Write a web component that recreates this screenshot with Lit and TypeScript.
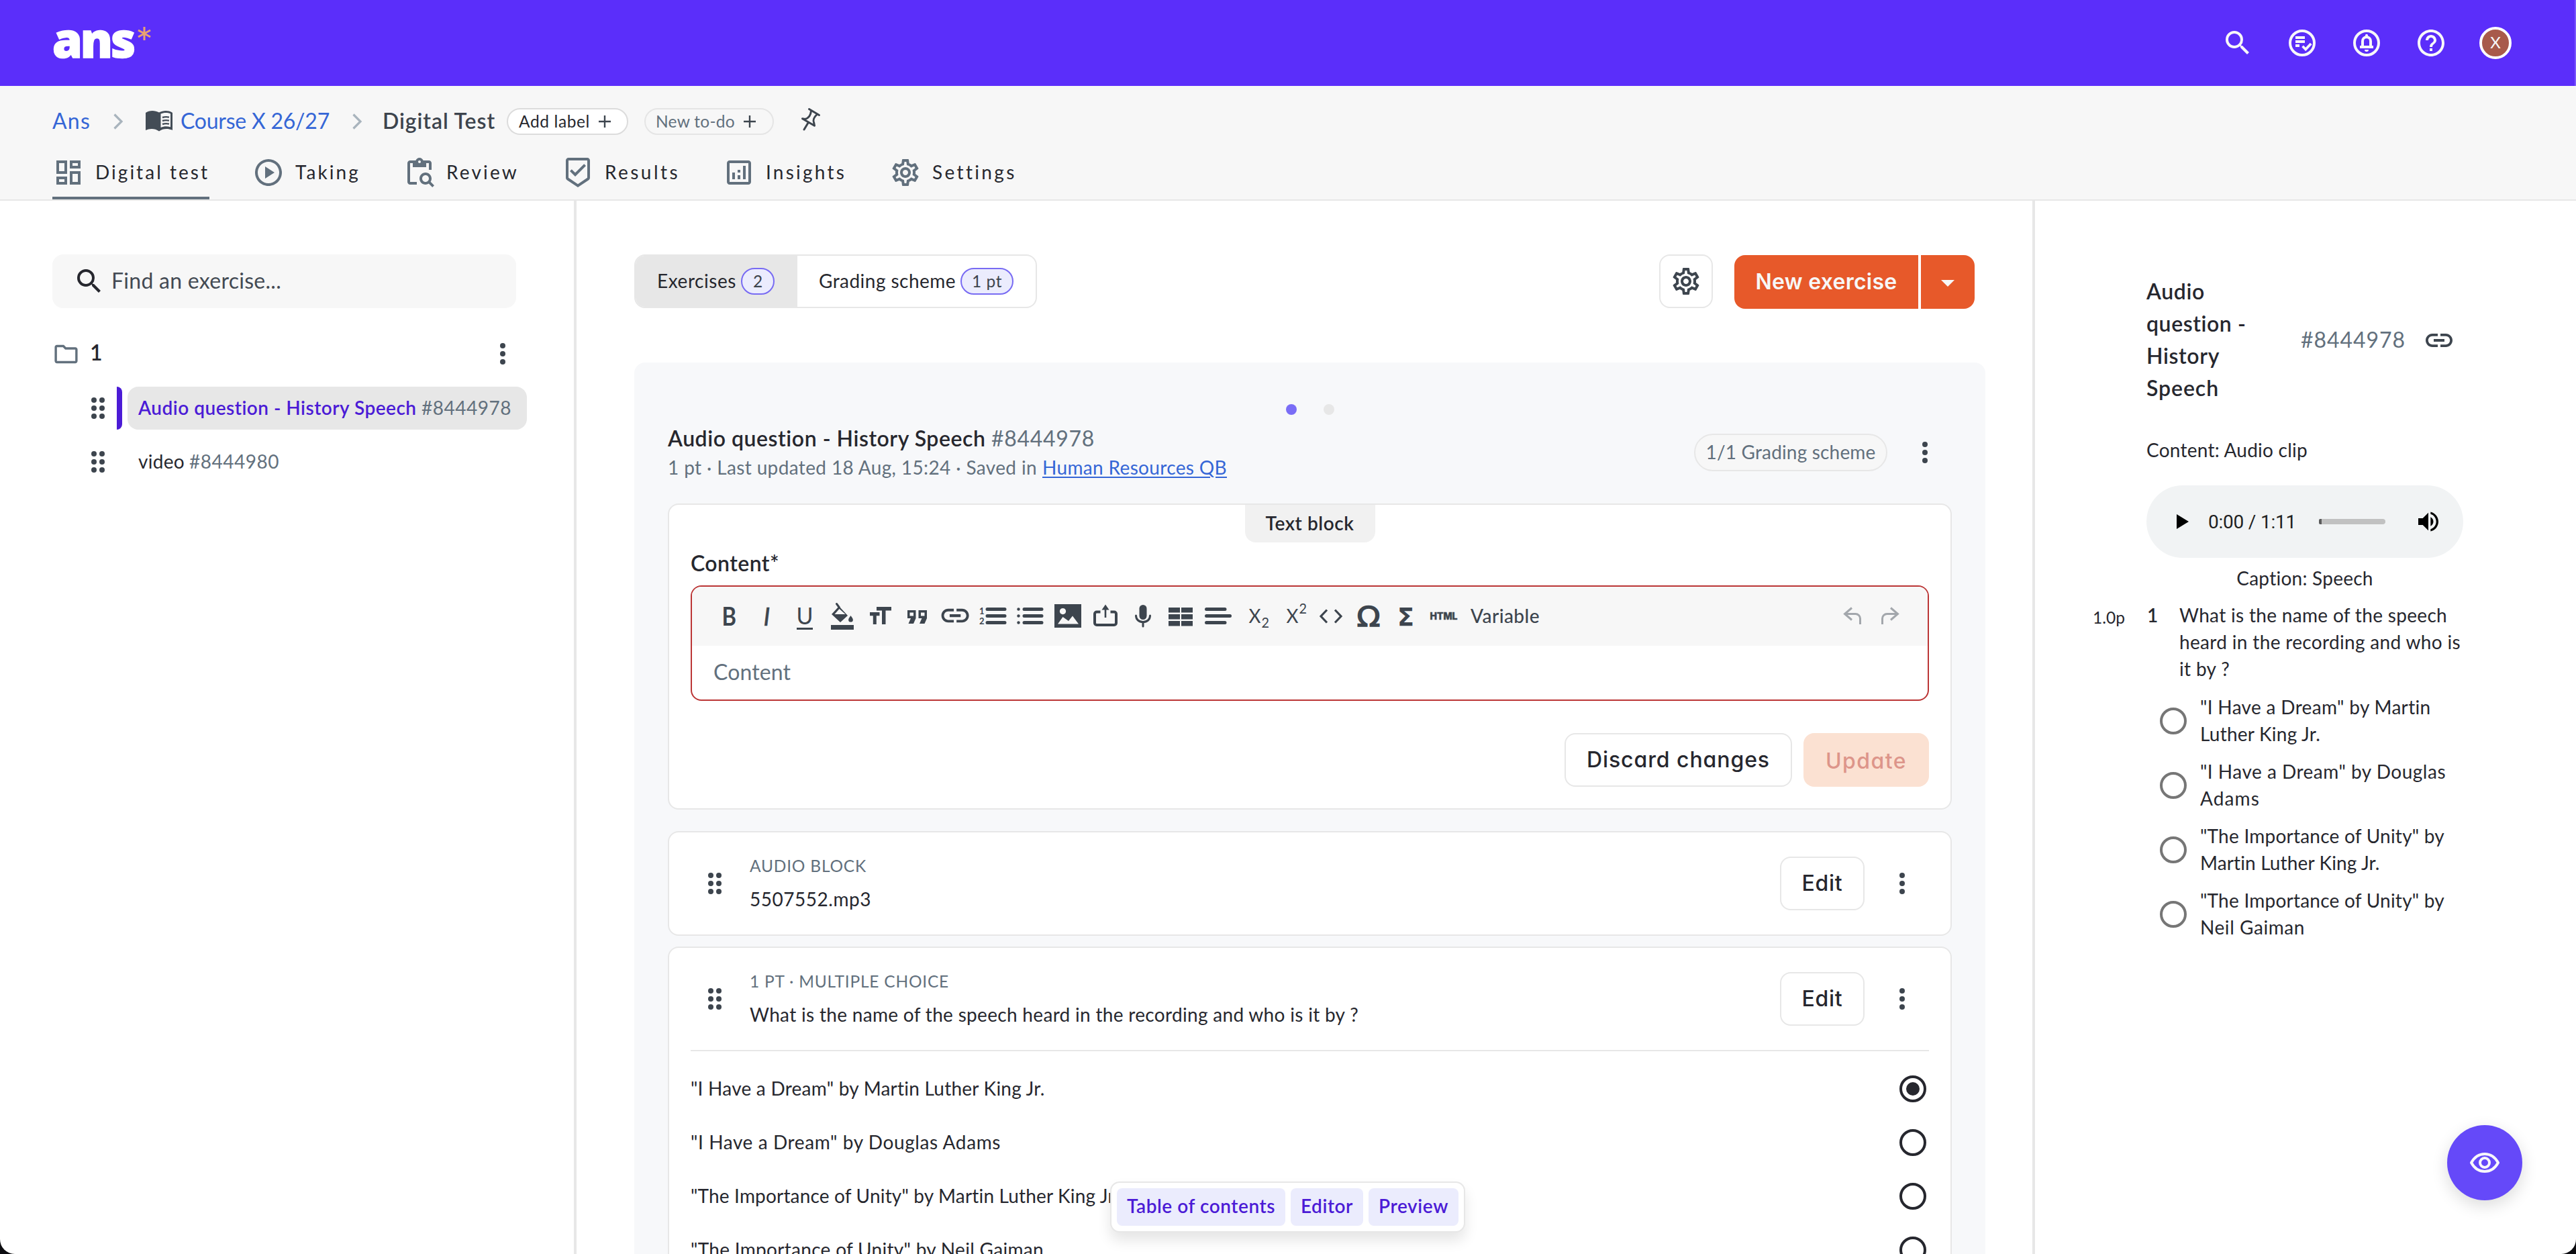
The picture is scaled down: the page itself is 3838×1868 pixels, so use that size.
import { LitElement, html, css, svg } from "lit";
import { customElement, property } from "lit/decorators.js";

/* A single line of text whose letters are spread to fill a given width. */
@customElement("fit-text")
class FitText extends LitElement {
  @property({ type: Number }) w = 0;
  static styles = css`
    :host {
      display: inline-block;
      white-space: nowrap;
      flex: none;
      width: max-content;
    }
  `;
  firstUpdated() {
    const count = (this.textContent || "").trim().length;
    const natural = this.getBoundingClientRect().width;
    if (!this.w || !count) return;
    this.style.letterSpacing = `${(this.w - natural) / count}px`;
    this.style.width = `${this.w}px`;
  }
  render() {
    return html`<slot></slot>`;
  }
}

const t = (w: number, text: string, cls = "") => html`<fit-text class=${cls} w=${w}>${text}</fit-text>`;

const icon = (body: unknown, size = 48, box = "0 0 24 24") =>
  html`<svg class="icon" width=${size} height=${size} viewBox=${box} fill="currentColor">${body}</svg>`;

const P = {
  search: svg`<path d="M15.5 14h-.79l-.28-.27A6.471 6.471 0 0 0 16 9.5 6.5 6.5 0 1 0 9.5 16c1.61 0 3.09-.59 4.23-1.57l.27.28v.79l5 4.99L20.49 19l-4.99-5zm-6 0C7.01 14 5 11.99 5 9.5S7.01 5 9.5 5 14 7.01 14 9.5 11.99 14 9.5 14z"/>`,
  help: svg`<path d="M11 18h2v-2h-2v2zm1-16C6.48 2 2 6.48 2 12s4.48 10 10 10 10-4.48 10-10S17.52 2 12 2zm0 18c-4.41 0-8-3.59-8-8s3.59-8 8-8 8 3.59 8 8-3.59 8-8 8zm0-14c-2.21 0-4 1.79-4 4h2c0-1.1.9-2 2-2s2 .9 2 2c0 2-3 1.75-3 5h2c0-2.25 3-2.5 3-5 0-2.21-1.79-4-4-4z"/>`,
  todo: svg`<circle cx="12" cy="12" r="9" fill="none" stroke="currentColor" stroke-width="2"/><path d="M7 7h7v2H7zM7 10h7v2H7zM7 13h3v2H7z"/><path d="M12.3 14.4l2.3 2.4 4-4.3" fill="none" stroke="currentColor" stroke-width="1.9"/>`,
  bell: svg`<circle cx="12" cy="12" r="9" fill="none" stroke="currentColor" stroke-width="2"/><path d="M7 14h10v2H7zM10.5 17h3a1.5 1.5 0 0 1-3 0z"/><path d="M9 15v-4.4a3 3 0 0 1 6 0V15" fill="none" stroke="currentColor" stroke-width="2"/><path d="M11 8V6.4a1 1 0 0 1 2 0V8z"/>`,
  dashboard: svg`<path d="M19 5v2h-4V5h4M9 5v6H5V5h4m10 8v6h-4v-6h4M9 17v2H5v-2h4M21 3h-8v6h8V3zM11 3H3v10h8V3zm10 8h-8v10h8V11zm-10 4H3v6h8v-6z"/>`,
  play: svg`<path d="M12 2C6.48 2 2 6.48 2 12s4.48 10 10 10 10-4.48 10-10S17.52 2 12 2zm0 18c-4.41 0-8-3.59-8-8s3.59-8 8-8 8 3.59 8 8-3.59 8-8 8zm-2.5-3.5 7-4.5-7-4.5v9z"/>`,
  review: svg`<path d="M5 5h2v3h10V5h2v5h2V5c0-1.1-.9-2-2-2h-4.18C14.4 1.84 13.3 1 12 1s-2.4.84-2.82 2H5c-1.1 0-2 .9-2 2v14c0 1.1.9 2 2 2h5v-2H5V5zm7-2c.55 0 1 .45 1 1s-.45 1-1 1-1-.45-1-1 .45-1 1-1z"/><path d="M20.3 18.9c.4-.7.7-1.5.7-2.4 0-2.5-2-4.5-4.5-4.5S12 14 12 16.5s2 4.5 4.5 4.5c.9 0 1.7-.3 2.4-.7l2.7 2.7 1.4-1.4-2.7-2.7zm-3.8.1c-1.4 0-2.5-1.1-2.5-2.5s1.1-2.5 2.5-2.5 2.5 1.1 2.5 2.5-1.1 2.5-2.5 2.5z"/>`,
  results: svg`<path d="M19 1H5c-1.1 0-1.99.9-1.99 2L3 15.93c0 .69.35 1.3.88 1.66L12 23l8.11-5.41c.53-.36.88-.97.88-1.66L21 3c0-1.1-.9-2-2-2zm0 14.93l-7 4.66-7-4.67V3h14v12.93zm-9-.93l8-8-1.41-1.42L10 12.17 7.41 9.59 6 11z"/>`,
  insights: svg`<path d="M19 3H5c-1.1 0-2 .9-2 2v14c0 1.1.9 2 2 2h14c1.1 0 2-.9 2-2V5c0-1.1-.9-2-2-2zm0 16H5V5h14v14z"/><path d="M7 12h2v5H7zM15 7h2v10h-2zM11 14h2v3h-2zM11 10h2v2h-2z"/>`,
  gear: svg`<path d="M19.43 12.98c.04-.32.07-.64.07-.98s-.03-.66-.07-.98l2.11-1.65c.19-.15.24-.42.12-.64l-2-3.46c-.09-.16-.26-.25-.44-.25-.06 0-.12.01-.17.03l-2.49 1c-.52-.4-1.08-.73-1.69-.98l-.38-2.65C14.46 2.18 14.25 2 14 2h-4c-.25 0-.46.18-.49.42l-.38 2.65c-.61.25-1.17.59-1.69.98l-2.49-1c-.06-.02-.12-.03-.18-.03-.17 0-.34.09-.43.25l-2 3.46c-.13.22-.07.49.12.64l2.11 1.65c-.04.32-.07.65-.07.98s.03.66.07.98l-2.11 1.65c-.19.15-.24.42-.12.64l2 3.46c.09.16.26.25.44.25.06 0 .12-.01.17-.03l2.49-1c.52.4 1.08.73 1.69.98l.38 2.65c.03.24.24.42.49.42h4c.25 0 .46-.18.49-.42l.38-2.65c.61-.25 1.17-.59 1.69-.98l2.49 1c.06.02.12.03.18.03.17 0 .34-.09.43-.25l2-3.46c.12-.22.07-.49-.12-.64l-2.11-1.65zm-1.98-1.71c.04.31.05.52.05.73 0 .21-.02.43-.05.73l-.14 1.13.89.7 1.08.84-.7 1.21-1.27-.51-1.04-.42-.9.68c-.43.32-.84.56-1.25.73l-1.06.43-.16 1.13-.2 1.35h-1.4l-.19-1.35-.16-1.13-1.06-.43c-.43-.18-.83-.41-1.23-.71l-.91-.7-1.06.43-1.27.51-.7-1.21 1.08-.84.89-.7-.14-1.13c-.03-.31-.05-.54-.05-.74s.02-.43.05-.73l.14-1.13-.89-.7-1.08-.84.7-1.21 1.27.51 1.04.42.9-.68c.43-.32.84-.56 1.25-.73l1.06-.43.16-1.13.2-1.35h1.39l.19 1.35.16 1.13 1.06.43c.43.18.83.41 1.23.71l.91.7 1.06-.43 1.27-.51.7 1.21-1.07.85-.89.7.14 1.13zM12 8c-2.21 0-4 1.79-4 4s1.79 4 4 4 4-1.79 4-4-1.79-4-4-4zm0 6c-1.1 0-2-.9-2-2s.9-2 2-2 2 .9 2 2-.9 2-2 2z"/>`,
  folder: svg`<path d="M9.17 6l2 2H20v10H4V6h5.17M10 4H4c-1.1 0-1.99.9-1.99 2L2 18c0 1.1.9 2 2 2h16c1.1 0 2-.9 2-2V8c0-1.1-.9-2-2-2h-8l-2-2z"/>`,
  link: svg`<path d="M3.9 12c0-1.71 1.39-3.1 3.1-3.1h4V7H7c-2.76 0-5 2.24-5 5s2.24 5 5 5h4v-1.9H7c-1.71 0-3.1-1.39-3.1-3.1zM8 13h8v-2H8v2zm9-6h-4v1.9h4c1.71 0 3.1 1.39 3.1 3.1s-1.39 3.1-3.1 3.1h-4V17h4c2.76 0 5-2.24 5-5s-2.24-5-5-5z"/>`,
  volume: svg`<path d="M3 9v6h4l5 5V4L7 9H3zm13.5 3c0-1.77-1.02-3.29-2.5-4.03v8.05c1.48-.73 2.5-2.25 2.5-4.02zM14 3.23v2.06c2.89.86 5 3.54 5 6.71s-2.11 5.85-5 6.71v2.06c4.01-.91 7-4.49 7-8.77s-2.99-7.86-7-8.77z"/>`,
  kebab: svg`<circle cx="12" cy="6" r="2"/><circle cx="12" cy="12" r="2"/><circle cx="12" cy="18" r="2"/>`,
  drag: svg`<circle cx="9" cy="6" r="2"/><circle cx="9" cy="12" r="2"/><circle cx="9" cy="18" r="2"/><circle cx="15" cy="6" r="2"/><circle cx="15" cy="12" r="2"/><circle cx="15" cy="18" r="2"/>`,
};

const plus = html`<svg width="20" height="20" viewBox="0 0 20 20"><path d="M1 10h18M10 1v18" stroke="#3d454e" stroke-width="2.4"/></svg>`;
const chevron = html`<svg class="chev" width="16" height="24" viewBox="0 0 16 24"><path d="M2.5 1.5L13 12 2.5 22.5" fill="none" stroke="#a9b4bd" stroke-width="3.2"/></svg>`;

/* Editor toolbar glyphs, each in a 56x56 cell. */
const line = (d: string, w: number, cap = "round") =>
  svg`<path d=${d} fill="none" stroke="currentColor" stroke-width=${w} stroke-linecap=${cap}/>`;
const tools = [
  svg`<text x="16.500" y="42" font-size="38" font-weight="700" textLength="21.500" lengthAdjust="spacingAndGlyphs">B</text>`,
  svg`<text x="22.500" y="42" font-size="37" font-style="italic" stroke="currentColor" stroke-width=".6">I</text>`,
  svg`<text x="15.5" y="39.5" font-size="35" textLength="25" lengthAdjust="spacingAndGlyphs">U</text><path d="M16 45h24v3H16z"/>`,
  svg`<path d="M11 41h34v7H11z"/>${line("M19.5 9.5l4 5.5", 3)}<path d="M23 13l13 14-11 10-13-12zM16.500 25h16L23.500 17z" fill-rule="evenodd"/><path d="M40.500 27c2 3 3.400 4.500 3.400 6.200a3.400 3.400 0 0 1-6.800 0c0-1.700 1.400-3.200 3.400-6.200z"/>`,
  svg`<path d="M23 14h22v5.500h-8.500V40h-5.500V19.500h-8zM13 22h14.500v5.200h-4.700V40h-5V27.200H13z"/>`,
  svg`<path d="M13 19h12.500v12l-3.500 8h-7.500l3.500-8h-5zM16.500 22.500v5h5.500v-5zM29.500 19H42v12l-3.500 8H31l3.500-8h-5zM33 22.500v5h5.500v-5z" fill-rule="evenodd"/>`,
  svg`<g transform="translate(3.500 2.500) scale(2.050)">${P.link}</g>`,
  svg`${line("M20 17.500h26M20 27.500h26M20 37.500h26", 5)}<text x="8" y="25" font-size="13" font-weight="700">1</text><text x="8" y="40" font-size="13" font-weight="700">2</text>`,
  svg`${line("M19 17.500h26M19 27.500h26M19 37.500h26", 5)}<circle cx="10.500" cy="17.500" r="2.200"/><circle cx="10.500" cy="27.500" r="2.200"/><circle cx="10.500" cy="37.500" r="2.200"/>`,
  svg`<path d="M8 10h40v35H8zM20.500 16a4.600 4.600 0 1 0 .01 0zM13 39.500h31L35 27.500l-6 7.500-8.500-6z" fill-rule="evenodd"/>`,
  svg`${line("M20.500 21.500H15a3 3 0 0 0-3 3V38a3 3 0 0 0 3 3h26a3 3 0 0 0 3-3V24.500a3 3 0 0 0-3-3h-5.500", 4, "butt")}${line("M28 30V15", 2.6, "butt")}<path d="M28 10.500l5.500 8h-11z"/>`,
  svg`<rect x="22.500" y="11" width="11" height="22" rx="5.500"/>${line("M17.500 27c0 6 4.500 9.500 10.500 9.500S38.500 33 38.500 27M28 37v6", 3)}`,
  svg`<path d="M10 15h17v7.500H10zM29 15h17v7.500H29zM10 25h17v7.500H10zM29 25h17v7.500H29zM10 35h17v7.500H10zM29 35h17v7.500H29z"/>`,
  svg`${line("M10.500 17.500h27.500M10.500 27.500h35M10.500 37.500h27.500", 5)}`,
  svg`<text x="17.500" y="38" font-size="28" textLength="18" lengthAdjust="spacingAndGlyphs">X</text><text x="36.500" y="44.500" font-size="21" textLength="11.500" lengthAdjust="spacingAndGlyphs">2</text>`,
  svg`<text x="17.500" y="37.500" font-size="28" textLength="18" lengthAdjust="spacingAndGlyphs">X</text><text x="36.500" y="24" font-size="21" textLength="11.500" lengthAdjust="spacingAndGlyphs">2</text>`,
  svg`<path d="M22 18.500l-9 9.500 9 9.500M34 18.500l9 9.500-9 9.500" fill="none" stroke="currentColor" stroke-width="3.200"/>`,
  svg`<text x="10.500" y="42.500" font-size="40" class="sym thin" textLength="35" lengthAdjust="spacingAndGlyphs">Ω</text>`,
  svg`<text x="15" y="42" font-size="38" class="sym" textLength="25" lengthAdjust="spacingAndGlyphs">Σ</text>`,
  svg`<text x="7.500" y="33" font-size="14.500" class="mark" textLength="41" lengthAdjust="spacingAndGlyphs">HTML</text>`,
];
const undo = svg`<path d="M27 15.500L16.500 24.500 27 33.500M17 24.500h15.500a7 7 0 0 1 7 7v8.500" fill="none" stroke="currentColor" stroke-width="3"/>`;

const tabs: [unknown, string, number][] = [
  [P.dashboard, "Digital test", 170],
  [P.play, "Taking", 97],
  [P.review, "Review", 108],
  [P.results, "Results", 112],
  [P.insights, "Insights", 120],
  [P.gear, "Settings", 125],
];

const answers: [string, number][] = [
  ['"I Have a Dream" by Martin Luther King Jr.', 528],
  ['"I Have a Dream" by Douglas Adams', 462],
  ['"The Importance of Unity" by Martin Luther King Jr.', 638],
  ['"The Importance of Unity" by Neil Gaiman', 526],
];

const options: [string, number][][] = [
  [['"I Have a Dream" by Martin', 344], ["Luther King Jr.", 179]],
  [['"I Have a Dream" by Douglas', 366], ["Adams", 89]],
  [['"The Importance of Unity" by', 364], ["Martin Luther King Jr.", 268]],
  [['"The Importance of Unity" by', 364], ["Neil Gaiman", 156]],
];

@customElement("app-root")
class AppRoot extends LitElement {
  static styles = css`
    :host {
      display: block;
      background: #0c0c10;
      font-family: Lato, "Noto Sans", "Open Sans", sans-serif;
      font-size: 28px;
      line-height: 40px;
      color: #26272e;
    }
    * { box-sizing: border-box; }
    svg { display: block; flex: none; }
    .app {
      position: relative;
      width: 3838px;
      height: 1868px;
      overflow: hidden;
      background: #fff;
      border-radius: 0 0 22px 22px;
      display: flex;
      flex-direction: column;
    }
    .semi { font-weight: 600; }
    .big { font-size: 32px; }
    .mute { color: #62707d; }

    .top {
      height: 128px;
      flex: none;
      background: #5b2efa;
      border-right: 2px solid #7a57fb;
      display: flex;
      align-items: center;
      justify-content: space-between;
      padding: 0 94px 0 78px;
      color: #f7f7f9;
    }
    .brand { display: flex; align-items: flex-start; }
    .logo {
      font-family: "Open Sans", "Noto Sans", sans-serif;
      font-weight: 800;
      font-size: 72px;
      line-height: 116px;
      height: 128px;
      color: #fff;
      -webkit-text-stroke: 1.6px #fff;
    }
    .star { margin: 38px 0 0 4px; }
    .actions { display: flex; gap: 48px; }
    .avatar {
      width: 48px;
      height: 48px;
      border: 4px solid #fff;
      border-radius: 50%;
      background: #a85a4b;
      font-size: 24px;
      line-height: 38px;
      text-align: center;
    }

    .sub {
      flex: none;
      height: 171px;
      background: #f7f7f7;
      border-bottom: 2px solid #e7e7e7;
      padding: 33px 0 0 78px;
    }
    .crumbs { display: flex; align-items: center; height: 40px; }
    .crumbs .big { padding-bottom: 3px; }
    .link { color: #3566d6; }
    .chev { margin-top: -1px; }
    .g1 { margin-left: 33px; }
    .g2 { margin: -2px 0 0 33px; }
    .g3 { margin-left: 12px; }
    .g4 { margin-left: 33px; }
    .g5 { margin-left: 30px; }
    .title { color: #3d444d; }
    .pill {
      height: 40px;
      border: 2px solid #dcdcdc;
      border-radius: 20px;
      background: #fff;
      display: flex;
      align-items: center;
      font-size: 24.5px;
      padding: 0 22px 1px 16px;
      gap: 12px;
      width: 181px;
      margin-left: 17px;
    }
    .pill.dim {
      background: #f7f7f7;
      border-color: #e5e5e5;
      width: 193px;
      margin-left: 24px;
      padding-left: 15px;
    }
    .pin { margin: -6px 0 0 38px; }
    .tabs { display: flex; gap: 64px; margin-top: 32px; }
    .tab {
      display: flex;
      gap: 16px;
      height: 64px;
      border-bottom: 4px solid transparent;
      color: #62707d;
    }
    .tab fit-text { line-height: 46px; color: #26272e; }
    .tab.on { border-color: #62707d; }

    .body { flex: 1; display: grid; grid-template-columns: 859px 2173px 1fr; min-height: 0; }
    .side { border-right: 4px solid #e7e7e7; padding: 80px 0 0 78px; }
    .find {
      width: 691px;
      height: 80px;
      border-radius: 16px;
      background: #f7f7f7;
      display: flex;
      align-items: center;
      gap: 9px;
      padding-left: 31px;
    }
    .find fit-text { color: #434a53; padding-bottom: 3px; }
    .folder { display: flex; align-items: center; width: 695px; height: 48px; margin-top: 44px; gap: 15px; }
    .folder fit-text { padding-bottom: 4px; }
    .folder .icon:first-child { color: #62707d; }
    .folder .icon:last-child { margin-left: auto; color: #3d454e; }
    .row { display: flex; height: 64px; padding-left: 44px; align-items: center; margin-top: 16px; color: #3d454e; }
    .row.first { margin-top: 25px; }
    .bar { width: 8px; height: 64px; margin: 0 8px 0 4px; border-radius: 0 8px 8px 0; }
    .item {
      width: 595px;
      height: 64px;
      border-radius: 16px;
      display: flex;
      align-items: center;
      gap: 7px;
      padding: 0 0 2px 16px;
      color: #26272e;
    }
    .on .bar { background: #4b1bd6; }
    .on .item { background: #e7e7e7; color: #4b1bd6; }

    .main {
      border-right: 4px solid #e7e7e7;
      padding: 80px 0 0 86px;
      display: flex;
      flex-direction: column;
      min-height: 0;
    }
    .bar2 { display: flex; width: 1997px; height: 81px; align-items: flex-start; flex: none; }
    .seg { display: flex; height: 80px; width: 600px; border: 2px solid #e7e7e7; border-radius: 16px; overflow: hidden; }
    .seg > div { display: flex; align-items: center; padding-left: 32px; gap: 7px; flex: 1; }
    .seg > .cur { background: #e7e7e7; flex: none; width: 241px; }
    .seg > div > fit-text { padding-bottom: 2px; }
    .badge {
      height: 40px;
      width: 50px;
      border: 2px solid #786bf3;
      border-radius: 20px;
      background: #ebecfd;
      font-size: 24.5px;
      line-height: 35px;
      text-align: center;
      color: #3d444d;
    }
    .badge.wide { width: 79px; }
    .btn {
      height: 80px;
      border: 2px solid #e7e7e7;
      border-radius: 16px;
      background: #fff;
      display: flex;
      align-items: center;
      justify-content: center;
      font-family: Inter, Roboto, sans-serif;
      font-feature-settings: "cv11";
      font-weight: 500;
      font-size: 32px;
      flex: none;
    }
    .cog { width: 80px; margin-left: auto; color: #3d454e; }
    .new { width: 274px; border: 0; border-radius: 16px 0 0 16px; background: #e7592a; color: #f7f7f7; margin: 1px 4px 0 32px; font-weight: 600; }
    .caret { width: 80px; border: 0; border-radius: 0 16px 16px 0; background: #e7592a; margin-top: 1px; }

    .panel {
      width: 2013px;
      margin-top: 80px;
      flex: 1;
      min-height: 0;
      background: #f7f8fa;
      border-radius: 16px 16px 0 0;
      padding: 62px 50px 0;
      overflow: hidden;
    }
    .dots { display: flex; justify-content: center; gap: 40px; }
    .dot { width: 16px; height: 16px; border-radius: 50%; background: #e7e7e7; }
    .dot.cur { background: #7a6df6; }
    .head { display: flex; align-items: center; height: 88px; margin-top: 12px; padding-right: 16px; }
    .head .lines { flex: 1; line-height: 45px; }
    .lines > div { display: flex; gap: 8px; height: 44px; }
    .lines .link { text-decoration: underline; text-decoration-thickness: 2px; text-underline-offset: 3px; }
    .scheme {
      width: 288px;
      height: 56px;
      border: 2px solid #e7e7e7;
      border-radius: 28px;
      background: #f7f7f7;
      line-height: 51px;
      text-align: center;
      margin-right: 32px;
    }
    .dark { color: #3d454e; }
    .card { background: #fff; border: 2px solid #e7e7e7; border-radius: 16px; padding: 0 32px; }
    .c1 { height: 456px; margin-top: 32px; display: flex; flex-direction: column; }
    .tag {
      width: 194px;
      height: 56px;
      align-self: center;
      background: #f1f1f1;
      border-radius: 0 0 16px 16px;
      line-height: 54px;
      text-align: center;
      flex: none;
    }
    .label { margin: 11px 0 13px 0; height: 40px; }
    .editor { height: 172px; border: 2px solid #bb3535; border-radius: 16px; overflow: hidden; flex: none; }
    .tools { display: flex; align-items: center; height: 88px; background: #f7f7f7; padding: 0 28px; color: #3d454e; }
    .tools svg { font-family: Lato, "Noto Sans", sans-serif; }
    .sym { font-family: "DejaVu Sans", sans-serif; font-weight: 700; }
    .thin { font-weight: 400; stroke: currentColor; stroke-width: 1.4px; }
    .mark { font-family: Inter, sans-serif; font-weight: 800; stroke: currentColor; stroke-width: 0.5px; }
    .tools fit-text { margin: 0 auto 2px 12px; font-weight: 500; }
    .off { color: #a3a7ac; }
    .flip { transform: scaleX(-1); }
    .ph { padding-left: 32px; line-height: 78px; }
    .foot { display: flex; justify-content: flex-end; gap: 17px; margin-top: 48px; }
    .discard { width: 339px; }
    .update { width: 187px; border: 0; background: #fbe1d2; color: #dd958a; padding-top: 4px; }
    .block { display: flex; align-items: center; height: 152px; padding: 0 16px 0 12px; color: #3d454e; }
    .block .txt { flex: 1; margin-left: 28px; padding-bottom: 4px; color: #26272e; }
    .kind { font-size: 24.5px; height: 49px; line-height: 40px; }
    .edit { width: 126px; margin-right: 32px; color: #26272e; }
    .c2 { height: 156px; margin-top: 32px; }
    .c3 { height: 700px; margin-top: 16px; }
    .c3 .block { border-bottom: 2px solid #e7e7e7; height: 154px; }
    .ans { display: flex; align-items: center; justify-content: space-between; height: 80px; padding-right: 4px; }
    .ans:nth-child(2) { margin-top: 16px; }
    .ans fit-text { padding-bottom: 2px; }
    .radio { width: 40px; height: 40px; border: 4px solid #26272e; border-radius: 50%; padding: 6px; flex: none; }
    .radio.sel::after { content: ""; display: block; width: 20px; height: 20px; border-radius: 50%; background: #26272e; }

    .prev { padding: 111px 0 0 86px; }
    .ptitle { display: flex; align-items: center; padding-left: 80px; height: 192px; }
    .ptitle .name { width: 230px; line-height: 48px; }
    .name fit-text { display: block; }
    .ptitle .icon { margin: 1px 0 0 26px; color: #3d454e; }
    .kindline { margin: 48px 0 33px 80px; }
    .player {
      width: 472px;
      height: 108px;
      margin-left: 80px;
      border-radius: 54px;
      background: #f1f3f4;
      display: flex;
      align-items: center;
      padding-left: 45px;
      font-family: Roboto, "Liberation Sans", sans-serif;
      color: #1f1f1f;
    }
    .player .time { margin-left: 29px; padding-top: 1px; }
    .track { width: 99px; height: 8px; margin-left: 34px; border-radius: 2px 4px 4px 2px; background: #c1c1c1; border-left: 4px solid #5a5a5a; }
    .player .icon { margin-left: 44px; color: #000; }
    .cap { width: 472px; margin: 10px 0 15px 80px; text-align: center; }
    .q { display: grid; grid-template-columns: 81px 48px 1fr; }
    .q .pts { font-size: 24.5px; padding-top: 4px; }
    .stack > fit-text { display: block; }
    .opts { display: flex; flex-direction: column; gap: 16px; margin: 17px 0 0 100px; }
    .opt { display: flex; align-items: center; gap: 20px; height: 80px; }
    .opt .radio { border-color: #767676; margin-top: 2px; }

    .jump {
      position: absolute;
      left: 1654px;
      top: 1760px;
      width: 529px;
      height: 76px;
      background: #fff;
      border: 2px solid #e7e7e7;
      border-radius: 14px;
      box-shadow: 0 12px 20px rgba(0, 0, 0, 0.1);
      display: flex;
      align-items: center;
      justify-content: center;
      gap: 8px;
      color: #4b1bd6;
    }
    .jump > div { background: #ebecfd; border-radius: 8px; height: 56px; line-height: 53px; padding: 0 15px; }
    .fab {
      position: absolute;
      left: 3646px;
      top: 1676px;
      width: 112px;
      height: 112px;
      border-radius: 50%;
      background: #6549f9;
      box-shadow: 0 8px 24px rgba(0, 0, 0, 0.14);
      display: flex;
      align-items: center;
      justify-content: center;
    }
  `;

  private block(kind: string, kw: number, text: string, tw: number) {
    return html`<div class="block">
      ${icon(P.drag)}
      <div class="txt">
        <div class="kind mute">${t(kw, kind)}</div>
        <div>${t(tw, text)}</div>
      </div>
      <div class="btn edit">${t(61, "Edit")}</div>
      ${icon(P.kebab)}
    </div>`;
  }

  render() {
    return html`<div class="app">
      <header class="top">
        <div class="brand">
          ${t(121, "ans", "logo")}
          <svg class="star" width="24" height="24" viewBox="0 0 24 24"><path d="M12 2v20M3 7l18 10M21 7L3 17" stroke="#e8a272" stroke-width="3"/></svg>
        </div>
        <div class="actions">
          ${icon(P.search)} ${icon(P.todo)} ${icon(P.bell)} ${icon(P.help)}
          <div class="avatar">X</div>
        </div>
      </header>

      <div class="sub">
        <div class="crumbs">
          ${t(57, "Ans", "big link")}
          <span class="g1">${chevron}</span>
          <svg class="g2" width="40" height="32" viewBox="0 0 40 32">
            <path d="M0 4C5 0 14 0 20 3.500 26 0 35 0 40 4v26c-6-3-14-3-20 1.500C14 27 6 27 0 30z" fill="#434c56"/>
            <path d="M22.500 5.500c4-2 10-2.200 14.500-.2v20c-5-1.600-10-1.400-14.500.8z" fill="#f7f7f7"/>
            <path d="M25 11c3-1 6.500-1.200 10-.4M25 16c3-1 6.500-1.200 10-.4M25 21c3-1 6.500-1.200 10-.4" stroke="#434c56" stroke-width="2.400" fill="none"/>
          </svg>
          ${t(222, "Course X 26/27", "big link g3")}
          <span class="g4">${chevron}</span>
          ${t(168, "Digital Test", "big semi title g5")}
          <div class="pill">${t(106, "Add label")}${plus}</div>
          <div class="pill dim mute">${t(118, "New to-do")}${plus}</div>
          <svg class="pin" width="32" height="36" viewBox="0 0 32 36" fill="none" stroke="#3d454e" stroke-width="3" stroke-linecap="round" stroke-linejoin="round">
            <path d="M14.500 2.500l15 9M17.500 5c-.5 6-3.500 11-9 12.500l-4-.8 18 10.600-.8-4.300c-1.800-3.500 0-8.500 4.500-12.500M13 23L7 33"/>
          </svg>
        </div>
        <nav class="tabs">
          ${tabs.map(([ic, name, w], i) => html`<div class="tab ${i === 0 ? "on" : ""}">${icon(ic)}${t(w, name)}</div>`)}
        </nav>
      </div>

      <div class="body">
        <aside class="side">
          <div class="find">${icon(P.search)}${t(253, "Find an exercise...", "big")}</div>
          <div class="folder">${icon(P.folder, 41)}<fit-text class="big semi">1</fit-text>${icon(P.kebab)}</div>
          <div class="row first on">
            ${icon(P.drag)}
            <div class="bar"></div>
            <div class="item">${t(415, "Audio question - History Speech", "semi")}${t(134, "#8444978", "mute")}</div>
          </div>
          <div class="row">
            ${icon(P.drag)}
            <div class="bar"></div>
            <div class="item">${t(69, "video")}${t(134, "#8444980", "mute")}</div>
          </div>
        </aside>

        <main class="main">
          <div class="bar2">
            <div class="seg">
              <div class="cur">${t(118, "Exercises")}<div class="badge">2</div></div>
              <div>${t(204, "Grading scheme")}<div class="badge wide">${t(45, "1 pt")}</div></div>
            </div>
            <div class="btn cog">${icon(P.gear)}</div>
            <div class="btn new">${t(211, "New exercise")}</div>
            <div class="btn caret"><svg width="20" height="14" viewBox="0 0 20 14"><path d="M0 4h20L10 14z" fill="#f7f7f7"/></svg></div>
          </div>

          <section class="panel">
            <div class="dots"><div class="dot cur"></div><div class="dot"></div></div>
            <div class="head">
              <div class="lines">
                <div>${t(474, "Audio question - History Speech", "big semi")}${t(154, "#8444978", "big mute")}</div>
                <div class="mute">${t(550, "1 pt · Last updated 18 Aug, 15:24 · Saved in")}${t(275, "Human Resources QB", "link")}</div>
              </div>
              <div class="scheme mute">${t(253, "1/1 Grading scheme")}</div>
              <div class="dark">${icon(P.kebab)}</div>
            </div>

            <div class="card c1">
              <div class="tag">${t(132, "Text block", "semi")}</div>
              <div class="label">${t(132, "Content*", "big semi")}</div>
              <div class="editor">
                <div class="tools">
                  ${tools.map((g) => icon(g, 56, "0 0 56 56"))}
                  ${t(103, "Variable")}
                  <div class="off">${icon(undo, 56, "0 0 56 56")}</div>
                  <div class="off flip">${icon(undo, 56, "0 0 56 56")}</div>
                </div>
                <div class="ph mute">${t(115, "Content", "big")}</div>
              </div>
              <div class="foot">
                <div class="btn discard">${t(273, "Discard changes")}</div>
                <div class="btn update">${t(121, "Update")}</div>
              </div>
            </div>

            <div class="card c2">${this.block("AUDIO BLOCK", 174, "5507552.mp3", 181)}</div>

            <div class="card c3">
              ${this.block("1 PT · MULTIPLE CHOICE", 297, "What is the name of the speech heard in the recording and who is it by ?", 907)}
              ${answers.map(([a, w], i) => html`<div class="ans">${t(w, a)}<div class="radio ${i === 0 ? "sel" : ""}"></div></div>`)}
            </div>
          </section>
        </main>

        <aside class="prev">
          <div class="ptitle">
            <div class="name semi big">
              ${t(87, "Audio")}${t(149, "question -")}${t(109, "History")}${t(108, "Speech")}
            </div>
            ${t(156, "#8444978", "big mute")}
            ${icon(P.link)}
          </div>
          <div class="kindline">${t(240, "Content: Audio clip")}</div>
          <div class="player">
            <svg width="18" height="22" viewBox="0 0 18 22"><path d="M0 0l18 11L0 22z" fill="#000"/></svg>
            ${t(131, "0:00 / 1:11", "time")}
            <div class="track"></div>
            ${icon(P.volume, 40)}
          </div>
          <div class="cap">${t(204, "Caption: Speech")}</div>
          <div class="q">
            <div class="pts">${t(48, "1.0p")}</div>
            <div class="semi">1</div>
            <div class="stack">
              ${t(399, "What is the name of the speech")}${t(419, "heard in the recording and who is")}${t(75, "it by ?")}
            </div>
          </div>
          <div class="opts">
            ${options.map((lines) => html`<div class="opt"><div class="radio"></div><div class="stack">${lines.map(([s, w]) => t(w, s))}</div></div>`)}
          </div>
        </aside>
      </div>

      <div class="jump semi">
        <div>${t(221, "Table of contents")}</div>
        <div>${t(78, "Editor")}</div>
        <div>${t(104, "Preview")}</div>
      </div>
      <div class="fab">
        <svg width="46" height="34" viewBox="0 0 46 34" fill="none" stroke="#f7f7fb" stroke-width="4">
          <path d="M3 17C8 8 15 4 23 4s15 4 20 13c-5 9-12 13-20 13S8 26 3 17z" stroke-linejoin="round"/>
          <circle cx="23" cy="17" r="7"/>
        </svg>
      </div>
    </div>`;
  }
}
